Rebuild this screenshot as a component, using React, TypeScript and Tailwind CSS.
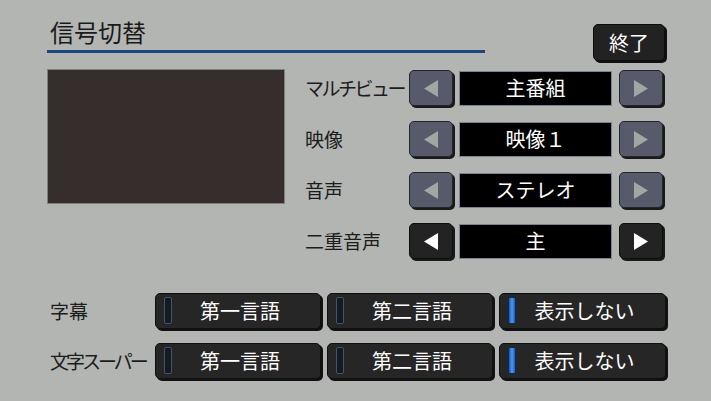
import React from 'react';

const font = { fontFamily: '"Noto Sans CJK JP", "Noto Sans", sans-serif' };

function Arrow({ dir, enabled }: { dir: 'left' | 'right'; enabled: boolean }) {
  const base = enabled
    ? 'bg-[#232323] border-[#0e0e0e]'
    : 'bg-[#565a6a] border-[#25262c]';
  const fill = enabled ? '#ffffff' : '#a3a7a3';
  return (
    <div
      className={`w-[44px] h-[36px] rounded-[5px] border flex items-center justify-center shadow-[2px_2px_0_#1a1a1a] ${base}`}
    >
      <svg width="16" height="19" viewBox="0 0 16 19">
        {dir === 'left' ? (
          <polygon points="15,1 15,18 1,9.5" fill={fill} />
        ) : (
          <polygon points="1,1 1,18 15,9.5" fill={fill} />
        )}
      </svg>
    </div>
  );
}

function SelectRow({ label, value, enabled, tight }: { label: string; value: string; enabled: boolean; tight?: boolean }) {
  return (
    <div className="flex items-center h-[36px]">
      <div className={`w-[104px] text-[19px] text-[#1c1c1c] whitespace-nowrap ${tight ? 'tracking-[-2.5px]' : ''}`}>
        {label}
      </div>
      <Arrow dir="left" enabled={enabled} />
      <div className="ml-[6px] w-[153px] h-[35px] bg-black border border-[#7c8394] flex items-center justify-center text-white text-[20px]">
        {value}
      </div>
      <div className="ml-[7px]">
        <Arrow dir="right" enabled={enabled} />
      </div>
    </div>
  );
}

function Choice({ text, active, w }: { text: string; active: boolean; w: string }) {
  return (
    <div
      className={`${w} h-[36px] rounded-[5px] bg-[#262626] border border-[#101010] shadow-[2px_2px_0_#121212] flex items-center relative`}
    >
      <div
        className={
          active
            ? 'absolute left-[8px] top-[3px] w-[8px] h-[27px] rounded-[2px] bg-gradient-to-r from-[#1b56b0] via-[#4f97ea] to-[#1d5cb8] border border-[#0d2a5a]'
            : 'absolute left-[8px] top-[3px] w-[8px] h-[27px] rounded-[2px] bg-[#17191c] border border-[#3a5873]'
        }
      />
      <div className="flex-1 text-center text-white text-[20px] pl-[4px]">{text}</div>
    </div>
  );
}

export default function App() {
  return (
    <div className="w-[711px] h-[401px] bg-[#b3b5b2] overflow-hidden" style={font}>
      <div className="flex items-start pl-[47px]">
        <div className="w-[438px] h-[53px] border-b-[3px] border-[#1d4580] flex items-end pl-[3px] pb-[6px]">
          <span className="text-[24px] leading-none text-[#1a1a1a]">信号切替</span>
        </div>
        <div className="ml-[108px] mt-[24px] w-[72px] h-[37px] rounded-[5px] bg-[#222222] border border-[#0d0d0d] shadow-[2px_2px_0_#111] flex items-center justify-center text-white text-[20px]">
          終了
        </div>
      </div>

      <div className="flex pl-[47px] mt-[8px]">
        <div className="w-[238px] h-[135px] bg-[#352e2d] border border-[#7f7f7f]" />
        <div className="ml-[20px] flex flex-col gap-[15px] mt-[1px]">
          <SelectRow label="マルチビュー" value="主番組" enabled={false} tight />
          <SelectRow label="映像" value="映像１" enabled={false} />
          <SelectRow label="音声" value="ステレオ" enabled={false} />
          <SelectRow label="二重音声" value="主" enabled />
        </div>
      </div>

      <div className="flex flex-col gap-[14px] mt-[34px] pl-[50px]">
        {[['字幕', false], ['文字スーパー', true]].map(([label, tight]) => (
          <div key={label as string} className="flex items-center">
            <div className={`w-[105px] text-[19px] text-[#1c1c1c] whitespace-nowrap ${tight ? 'tracking-[-3px]' : ''}`}>
              {label as string}
            </div>
            <div className="flex gap-[6px]">
              <Choice text="第一言語" active={false} w="w-[166px]" />
              <Choice text="第二言語" active={false} w="w-[166px]" />
              <Choice text="表示しない" active w="w-[167px]" />
            </div>
          </div>
        ))}
      </div>
    </div>
  );
}
